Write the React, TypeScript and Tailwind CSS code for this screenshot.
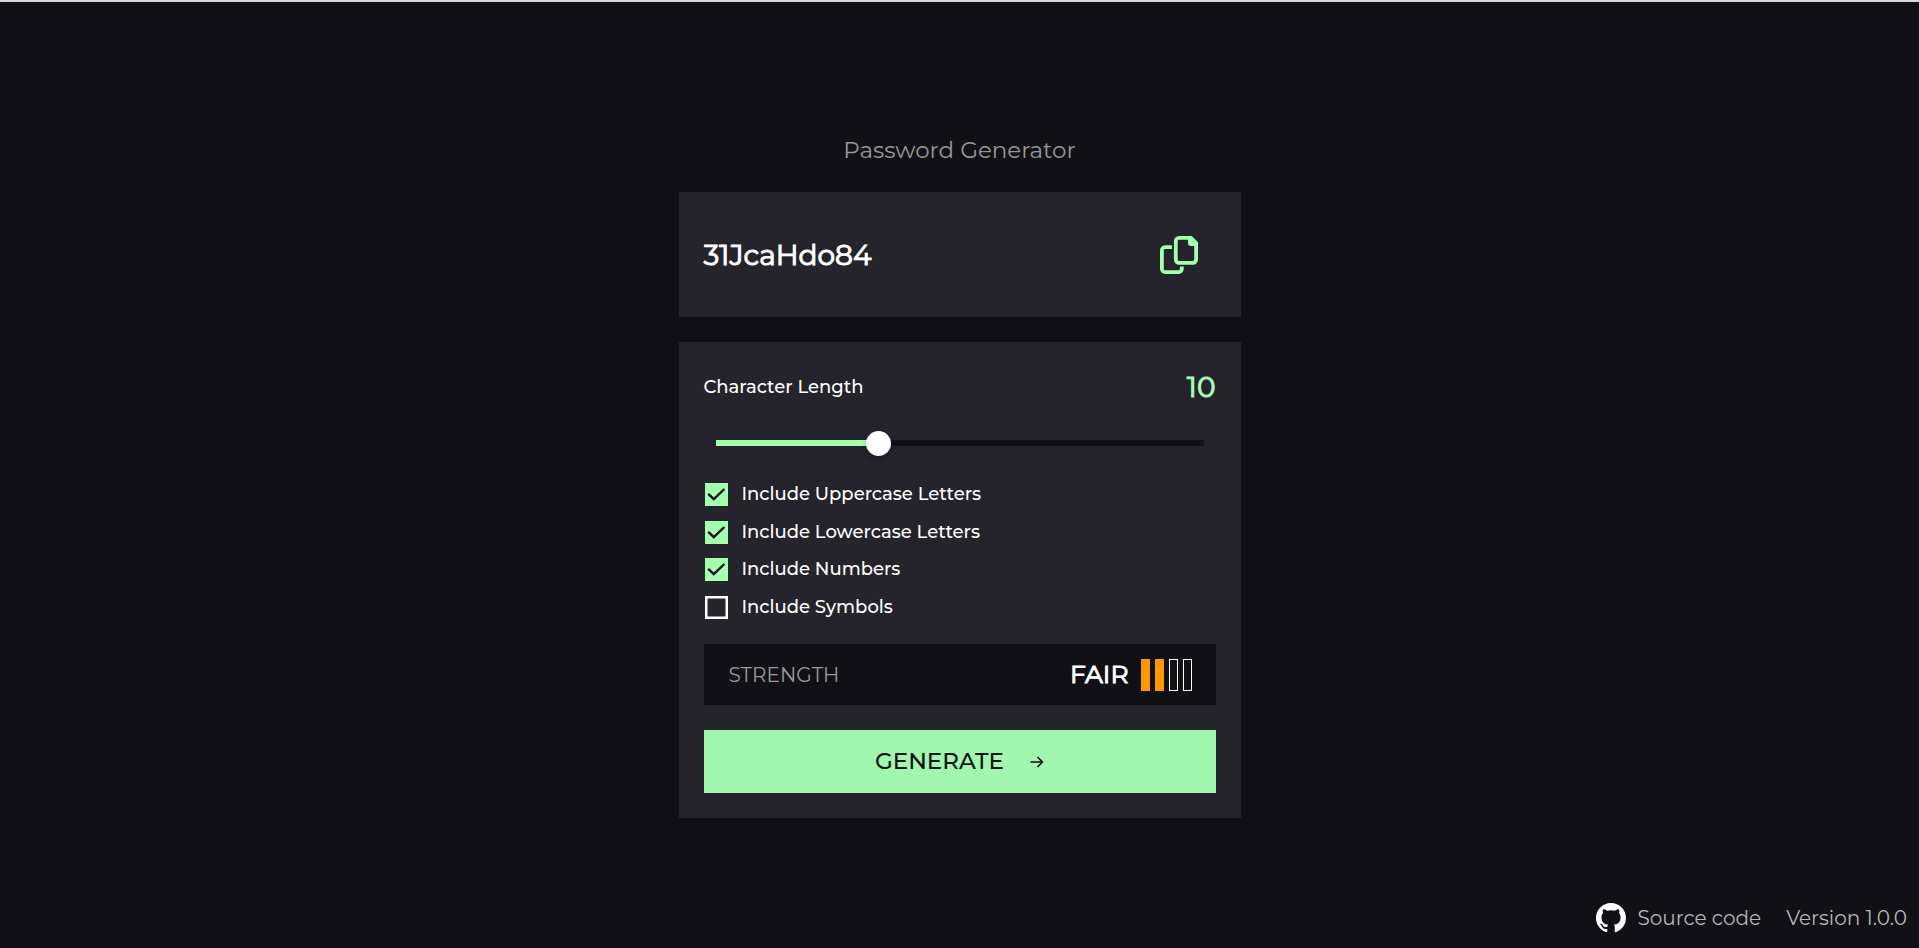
import { useState } from "react";

const CheckBoxIcon = ({ on }: { on: boolean }) => (
  <svg viewBox="0 0 23 23" className="pointer-events-none col-start-1 row-start-1 size-[23px]" fill="none" aria-hidden="true">
    {on ? (
      <>
        <path d="M0 0H23V23H0Z" fill="#a4ffaf" />
        <path d="M3.2 10.8 8.8 16.2 19.4 6" stroke="#111016" strokeWidth="2.4" />
      </>
    ) : (
      <path d="M1.25 1.25H21.75V21.75H1.25Z" stroke="#ffffff" strokeWidth="2.5" />
    )}
  </svg>
);

const options = [
  { label: "Include Uppercase Letters", on: true },
  { label: "Include Lowercase Letters", on: true },
  { label: "Include Numbers", on: true },
  { label: "Include Symbols", on: false },
];

export default function App() {
  const [length, setLength] = useState(10);
  const [checked, setChecked] = useState(options.map((o) => o.on));
  const fill = `${(length / 30) * 100}%`;

  return (
    <div className="grid min-h-screen grid-rows-[1fr_auto_1fr] border-t-2 border-[#d9d9d9] bg-[#111016] pb-px font-['Montserrat','Inter',sans-serif] text-white">
      <main className="row-start-2 mx-auto flex w-full max-w-[562px] flex-col gap-[25px]">
        <h1 className="pt-[2px] text-center text-[23px] leading-[34px] text-[#98979a]">Password Generator</h1>

        <section className="flex h-[125px] items-center justify-between bg-[#25232c] pr-[43px] pl-[25px]">
          <output className="text-[28px] [-webkit-text-stroke:1px_currentColor]">31JcaHdo84</output>
          <button type="button" aria-label="Copy password" className="text-[#a4ffaf]">
            <svg viewBox="0 0 38 38" className="size-[38px]" fill="none" stroke="currentColor" strokeWidth="3.8">
              <path d="M12 11.2H5A3.2 3.2 0 0 0 1.9 14.4V33A3.2 3.2 0 0 0 5 36.1H18.6A3.2 3.2 0 0 0 21.8 33V30.5" />
              <path d="M18.9 1.9H31L36.1 7V23.6A3.2 3.2 0 0 1 33 26.8H18.9A3.2 3.2 0 0 1 15.8 23.6V5A3.2 3.2 0 0 1 18.9 1.9Z" />
              <path d="M28 1H32L37 6V10H31A3 3 0 0 1 28 7Z" fill="currentColor" stroke="none" />
            </svg>
          </button>
        </section>

        <section className="flex flex-col bg-[#25232c] p-[25px]">
          <div className="flex h-[40px] items-center justify-between">
            <label htmlFor="length" className="text-[18px] font-medium">Character Length</label>
            <output htmlFor="length" className="text-[28px] text-[#a4ffaf] [-webkit-text-stroke:1px_currentColor]">{length}</output>
          </div>
          <div className="mt-[23px] grid h-[26px] items-center px-[12px]">
            <div className="col-start-1 row-start-1 h-[6px] bg-[#111016]">
              <div className="h-full bg-[#a4ffaf]" style={{ width: fill }} />
            </div>
            <input
              id="length"
              type="range"
              min={0}
              max={30}
              value={length}
              onChange={(e) => setLength(Number(e.target.value))}
              className="z-10 col-start-1 row-start-1 -mx-[12px] h-[26px] appearance-none bg-transparent [&::-webkit-slider-thumb]:size-[25px] [&::-webkit-slider-thumb]:appearance-none [&::-webkit-slider-thumb]:rounded-full [&::-webkit-slider-thumb]:bg-white [&::-webkit-slider-thumb]:shadow-[0_4px_6px_rgba(0,0,0,0.2)]"
            />
          </div>

          <div className="mt-[20px] grid h-[150px] grid-rows-4">
            {options.map((o, i) => (
              <label key={o.label} className="flex items-center gap-[14px] pl-px text-[18px] font-medium">
                <span className="grid">
                  <input
                    type="checkbox"
                    checked={checked[i]}
                    onChange={() => setChecked(checked.map((c, j) => (j === i ? !c : c)))}
                    className="col-start-1 row-start-1 size-[23px] appearance-none"
                  />
                  <CheckBoxIcon on={checked[i]} />
                </span>
                {o.label}
              </label>
            ))}
          </div>

          <div className="mt-[18px] flex h-[61px] items-center justify-between bg-[#111016] pr-[24px] pl-[25px]">
            <span className="text-[20px] text-[#98979a]">STRENGTH</span>
            <div className="flex items-center gap-[12px]">
              <span className="text-[25px] [-webkit-text-stroke:1px_currentColor]">FAIR</span>
              <div className="flex gap-[5px]">
                <span className="h-[32px] w-[9px] bg-[#ff9800]" />
                <span className="h-[32px] w-[9px] bg-[#ff9800]" />
                <span className="h-[32px] w-[9px] border border-white" />
                <span className="h-[32px] w-[9px] border border-white" />
              </div>
            </div>
          </div>

          <button type="button" className="mt-[25px] flex h-[63px] items-center justify-center gap-[26px] bg-[#a1f7ae] text-[23px] font-medium text-[#111016]">
            GENERATE
            <svg viewBox="0 0 14 12" className="h-[12px] w-[14px]" fill="none" stroke="currentColor" strokeWidth="1.6" aria-hidden="true">
              <path d="M.5 6H12.5M7.5 1 12.5 6 7.5 11" />
            </svg>
          </button>
        </section>
      </main>

      <footer className="row-start-3 flex items-center gap-[25px] self-end justify-self-end pr-[12px] pb-[14px] text-[20px] text-[#b8b7ba]">
        <a href="#source" className="flex items-center gap-[11px]">
          <svg viewBox="0 0 16 16" className="size-[30px] fill-white" aria-hidden="true">
            <path d="M8 0C3.58 0 0 3.58 0 8c0 3.54 2.29 6.53 5.47 7.59.4.07.55-.17.55-.38 0-.19-.01-.82-.01-1.49-2.01.37-2.53-.49-2.69-.94-.09-.23-.48-.94-.82-1.13-.28-.15-.68-.52-.01-.53.63-.01 1.08.58 1.23.82.72 1.21 1.87.87 2.33.66.07-.52.28-.87.51-1.07-1.78-.2-3.64-.89-3.64-3.95 0-.87.31-1.59.82-2.15-.08-.2-.36-1.02.08-2.12 0 0 .67-.21 2.2.82.64-.18 1.32-.27 2-.27s1.36.09 2 .27c1.53-1.04 2.2-.82 2.2-.82.44 1.1.16 1.92.08 2.12.51.56.82 1.27.82 2.15 0 3.07-1.87 3.75-3.65 3.95.29.25.54.73.54 1.48 0 1.07-.01 1.93-.01 2.2 0 .21.15.46.55.38A8.01 8.01 0 0 0 16 8c0-4.42-3.58-8-8-8" />
          </svg>
          Source code
        </a>
        <span>Version 1.0.0</span>
      </footer>
    </div>
  );
}
